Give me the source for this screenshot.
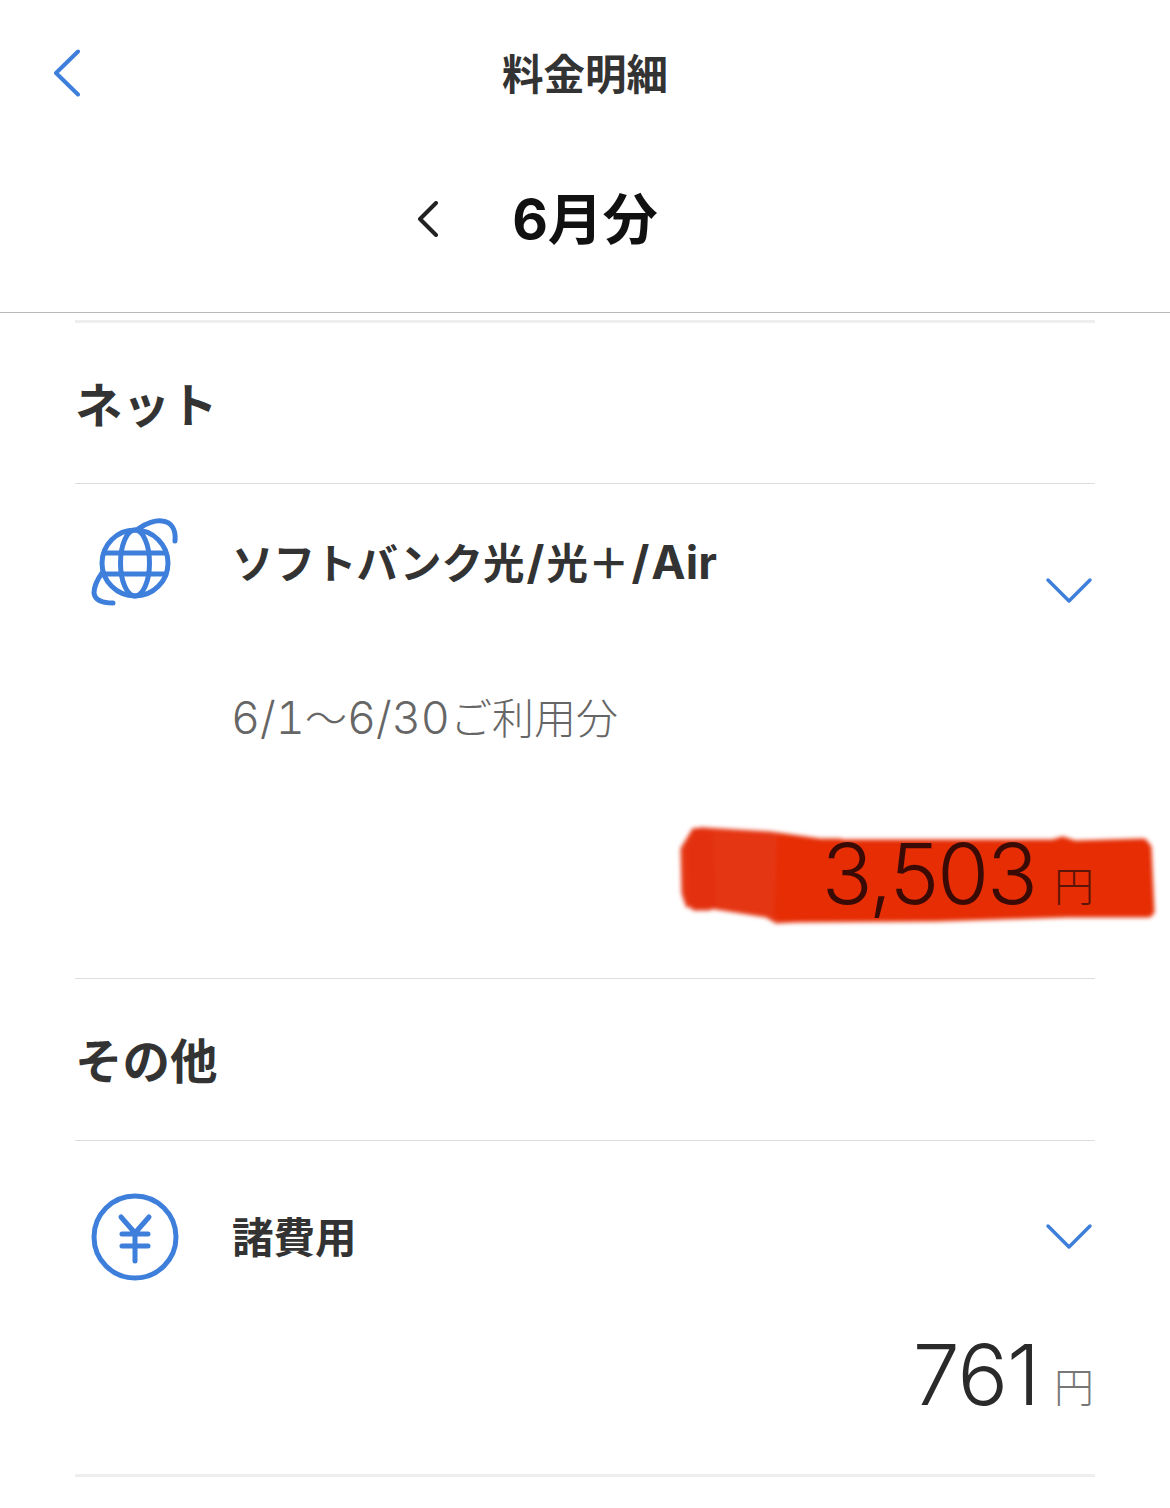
<div class="page">
  <header class="top">
    <div class="nav">
      <svg class="back" viewBox="0 0 28 48" width="28" height="48"><path d="M25 2.500 3 24l22 21.500" /></svg>
      <h1>料金明細</h1>
    </div>
    <div class="month">
      <svg class="prev" viewBox="0 0 22 36" width="22" height="36"><path d="M19 2 3 18l16 16" /></svg>
      <span>6月分</span>
    </div>
  </header>

  <main class="content">
    <hr class="thick" />
    <h2>ネット</h2>
    <section class="item net">
      <div class="row">
        <svg class="icon" viewBox="0 0 90 90" width="90" height="90">
          <circle cx="45" cy="47" r="33" />
          <ellipse cx="45" cy="47" rx="14.500" ry="33" />
          <path d="M14 37h62M14 58h62" />
          <path d="M48 13C56 7 66 4 72 5c10 1 14 9 13 20" />
          <path d="M12 57C7 64 4 71 4 77c1 8 9 10 19 10" />
        </svg>
        <div class="label">ソフトバンク光<span class="slash">/</span>光＋<span class="slash">/</span><span class="latin">Air</span></div>
        <svg class="down" viewBox="0 0 48 28" width="48" height="28"><path d="M3 3l21 21L45 3" /></svg>
      </div>
      <div class="period"><span class="latin">6/1</span>〜<span class="latin">6/30</span>ご利用分</div>
      <div class="amount">
        <svg class="scribble" viewBox="0 0 480 100" preserveAspectRatio="none">
          <path class="light" d="M14 6l9-1 67 4 50 7h20v75l-63 5-10-6-64-10-15 0-4-12-1-44z" />
          <path class="band" d="M14 6l9-1 8 4 3 70-5 4-15 0-3-14-1-44z" />
          <path d="M100 11l40 6h233l10-3 12 4 69-2 5 6 3 65-3 3-81 0-133 4-150 1-8-6z" />
        </svg>
        <span class="num">3,503</span><span class="yen">円</span>
      </div>
    </section>
    <h2 class="other">その他</h2>
    <section class="item fee">
      <div class="row">
        <svg class="icon" viewBox="0 0 90 90" width="90" height="90">
          <circle cx="45" cy="45" r="41" />
          <path d="M31 25l14 16 14-16M32 42h26M32 54h26M45 41v28" />
        </svg>
        <div class="label">諸費用</div>
        <svg class="down" viewBox="0 0 48 28" width="48" height="28"><path d="M3 3l21 21L45 3" /></svg>
      </div>
      <div class="amount">
        <span class="num">761</span><span class="yen">円</span>
      </div>
    </section>
    <hr class="thick" />
  </main>
</div>

<style>
:global(body) {
  margin: 0;
  background: #fff;
}
.page {
  width: 1170px;
  height: 1508px;
  overflow: hidden;
  font-family: Inter, "Noto Sans CJK JP", sans-serif;
  color: #333;
}
svg path, svg circle, svg ellipse {
  fill: none;
  stroke: #3f7fdc;
  stroke-linecap: round;
  stroke-linejoin: round;
}
.top {
  height: 312px;
  border-bottom: 1px solid #b8b8b8;
}
.nav {
  position: relative;
  height: 143px;
  display: flex;
  align-items: center;
  justify-content: center;
}
.back {
  position: absolute;
  left: 53px;
  top: 49px;
  stroke-width: 4px;
}
h1 {
  margin: 0;
  font-size: 41.500px;
  font-weight: 700;
  color: #333;
}
.month {
  position: relative;
  display: flex;
  justify-content: center;
  align-items: center;
  height: 140px;
  margin-top: 2px;
}
.month span {
  font-size: 55px;
  font-weight: 700;
  color: #111;
}
.prev {
  position: absolute;
  left: 417px;
  top: 56px;
}
.prev path {
  stroke: #222;
  stroke-width: 4px;
}
.content {
  padding: 0 75px;
}
hr {
  margin: 0;
  border: 0;
}
.thick {
  height: 3px;
  background: #eee;
  margin-top: 7px;
}
h2 {
  margin: 0;
  height: 161px;
  box-sizing: border-box;
  padding-top: 49px;
  font-size: 47.500px;
  line-height: 68px;
  font-weight: 700;
  border-bottom: 1px solid #ddd;
}
h2.other {
  height: 162px;
}
.item {
  position: relative;
}
.net {
  height: 494px;
  border-bottom: 1px solid #ddd;
}
.fee {
  height: 326px;
}
.row {
  display: flex;
  align-items: flex-start;
  padding-left: 15px;
  padding-top: 32px;
  position: relative;
}
.fee .row {
  padding-top: 51px;
}
.icon {
  flex: none;
}
.icon circle, .icon ellipse, .icon path {
  stroke-width: 5px;
}
.label {
  margin-left: 52px;
  font-size: 41.500px;
  line-height: 92px;
  font-weight: 700;
  color: #333;
}
.net .label {
  line-height: 60px;
  margin-top: 16px;
}
.latin {
  font-size: 46px;
}
.slash {
  font-size: 46px;
  padding: 0 2px;
}
.down {
  position: absolute;
  right: 2px;
  top: 93px;
}
.fee .down {
  top: 82px;
}
.down path {
  stroke-width: 3.500px;
}
.period {
  margin: 82px 0 0 156px;
  font-size: 42px;
  line-height: 60px;
  font-weight: 300;
  color: #666;
}
.period .latin {
  font-size: 45px;
  font-variant-numeric: tabular-nums;
}
.amount {
  position: relative;
  text-align: right;
  padding-right: 1px;
  line-height: 100px;
  font-weight: 300;
  color: #2a2a2a;
}
.net .amount {
  margin-top: 75px;
}
.fee .amount {
  margin-top: 41px;
}
.num {
  position: relative;
  font-size: 84px;
  letter-spacing: -2px;
}
.fee .num {
  letter-spacing: -1px;
}
.yen {
  position: relative;
  font-size: 40px;
  line-height: 1;
  margin-left: 18px;
  vertical-align: 3px;
  color: #777;
}
.fee .yen {
  margin-left: 15px;
}
.net .yen {
  color: #5b1408;
}
.net .num {
  color: #3a0a04;
}
.scribble {
  position: absolute;
  left: 605px;
  top: 1px;
  width: 480px;
  height: 100px;
  filter: blur(2px);
}
.scribble path {
  fill: #e62d04;
  stroke: #e62d04;
  stroke-width: 5px;
}
.scribble .light {
  fill: #e53613;
  stroke: #e53613;
}
.scribble .band {
  fill: #e33110;
  stroke: #e33110;
}
</style>
